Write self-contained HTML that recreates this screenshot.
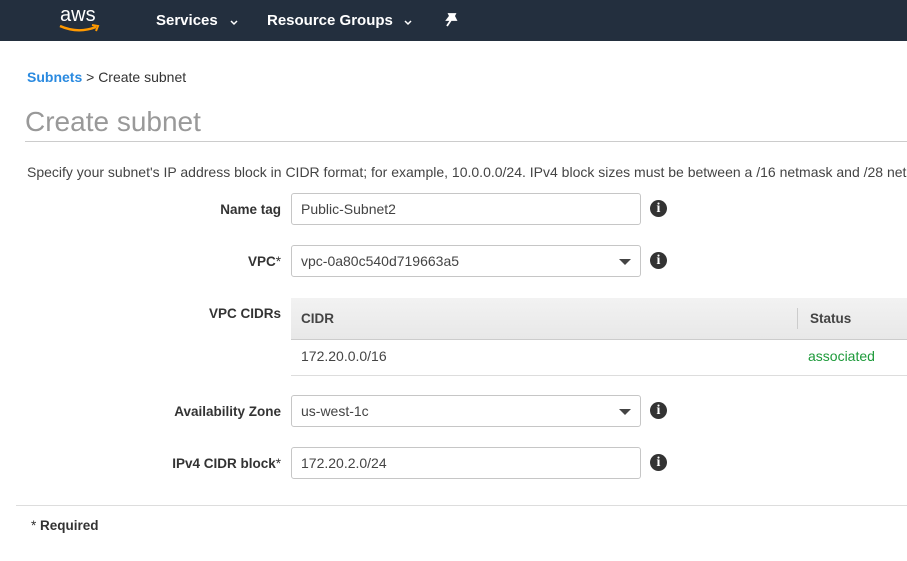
<!DOCTYPE html>
<html><head><meta charset="utf-8"><style>
*{margin:0;padding:0;box-sizing:border-box}
body{width:907px;height:561px;overflow:hidden;background:#fff;font-family:"Liberation Sans",Arial,sans-serif;color:#444;position:relative}
.a{position:absolute;white-space:nowrap}
.nav{left:0;top:0;width:907px;height:41px;background:#232f3e}
.nv{color:#fff;font-weight:bold;font-size:15px;top:12px}
.lbl{font-weight:bold;font-size:13.5px;color:#333;text-align:right;width:270px;left:11px}
.inp{left:291px;width:350px;height:32px;border:1px solid #c6c6c6;border-radius:3px;font-size:14px;color:#444;padding:7px 9px}
.tri{position:absolute;right:9px;top:13px;width:0;height:0;border-left:6px solid transparent;border-right:6px solid transparent;border-top:6px solid #444}
.info{left:650px;width:17px;height:17px;border-radius:50%;background:#333;color:#fff;font:bold 14px "Liberation Serif",serif;text-align:center;line-height:17px}
</style></head><body>
<div class="a nav"></div>
<div class="a" style="left:60px;top:4px;color:#fff;font-size:20px">aws</div>
<svg class="a" style="left:58px;top:24px" width="44" height="10"><path d="M2 2 Q20 10 38 3" stroke="#f90" stroke-width="2.4" fill="none"/><path d="M34 1 L40 2 L38 7" stroke="#f90" stroke-width="2" fill="none"/></svg>
<div class="a nv" style="left:156px">Services</div>
<svg class="a" style="left:229px;top:19px" width="10" height="7"><path d="M2 2 L5 5 L8 2" stroke="#fff" stroke-width="1.5" fill="none"/></svg>
<div class="a nv" style="left:267px">Resource Groups</div>
<svg class="a" style="left:403px;top:19px" width="10" height="7"><path d="M2 2 L5 5 L8 2" stroke="#fff" stroke-width="1.5" fill="none"/></svg>
<svg class="a" style="left:444px;top:13px" width="14" height="15"><path d="M5 1 L11 1 L10 3 L12 7 L3 7 L6 3 Z M7 7 L3 13" stroke="#fff" stroke-width="1.8" fill="#fff"/></svg>

<div class="a" style="left:27px;top:69px;font-size:14px;color:#333"><b style="color:#2a8ae0">Subnets</b> &gt; Create subnet</div>
<div class="a" style="left:25px;top:106px;font-size:28px;color:#999">Create subnet</div>
<div class="a" style="left:25px;top:141px;width:882px;height:1px;background:#ccc"></div>
<div class="a" style="left:27px;top:164px;font-size:14px;color:#444">Specify your subnet's IP address block in CIDR format; for example, 10.0.0.0/24. IPv4 block sizes must be between a /16 netmask and /28 netmask.</div>

<div class="a lbl" style="top:202px">Name tag</div>
<div class="a inp" style="top:193px">Public-Subnet2</div>
<div class="a info" style="top:200px">i</div>

<div class="a lbl" style="top:254px">VPC<span style="font-weight:normal">*</span></div>
<div class="a inp" style="top:245px">vpc-0a80c540d719663a5<div class="tri"></div></div>
<div class="a info" style="top:252px">i</div>

<div class="a lbl" style="top:306px">VPC CIDRs</div>
<div class="a" style="left:291px;top:298px;width:616px;height:42px;background:linear-gradient(#f2f2f2,#e8e8e8);border-bottom:1px solid #ccc"></div>
<div class="a" style="left:301px;top:311px;font-size:13.5px;font-weight:bold;color:#444">CIDR</div>
<div class="a" style="left:797px;top:308px;width:1px;height:21px;background:#ccc"></div>
<div class="a" style="left:810px;top:311px;font-size:13.5px;font-weight:bold;color:#444">Status</div>
<div class="a" style="left:301px;top:348px;font-size:14px">172.20.0.0/16</div>
<div class="a" style="left:808px;top:348px;font-size:14px;color:#1d9a3a">associated</div>
<div class="a" style="left:291px;top:375px;width:616px;height:1px;background:#ddd"></div>

<div class="a lbl" style="top:404px">Availability Zone</div>
<div class="a inp" style="top:395px">us-west-1c<div class="tri"></div></div>
<div class="a info" style="top:402px">i</div>

<div class="a lbl" style="top:456px">IPv4 CIDR block<span style="font-weight:normal">*</span></div>
<div class="a inp" style="top:447px">172.20.2.0/24</div>
<div class="a info" style="top:454px">i</div>

<div class="a" style="left:16px;top:505px;width:891px;height:1px;background:#ddd"></div>
<div class="a" style="left:31px;top:518px;font-size:13.5px;font-weight:bold;color:#333"><span style="font-weight:normal">*</span> Required</div>
</body></html>
